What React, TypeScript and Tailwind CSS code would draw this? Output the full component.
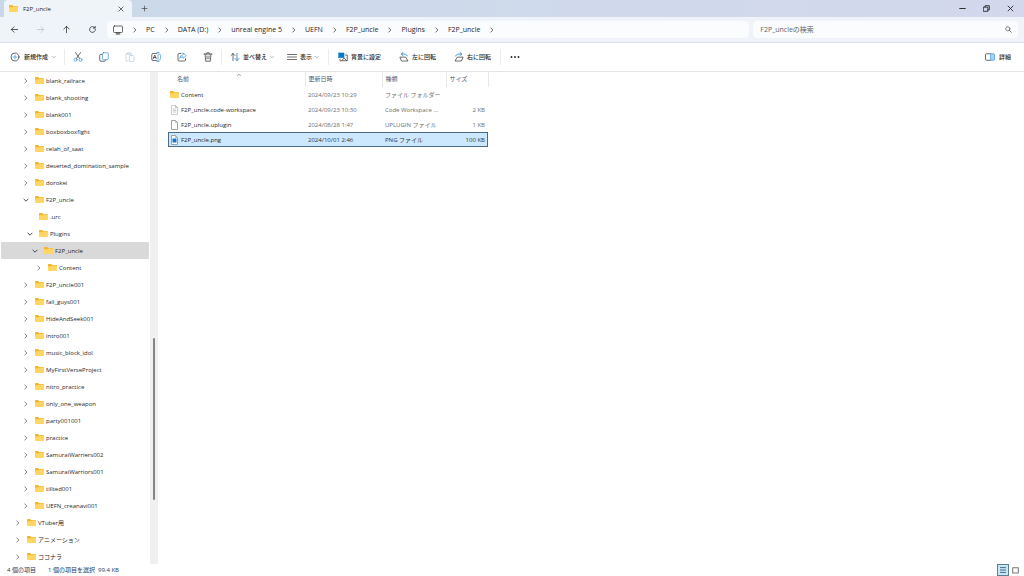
import { useState } from "react";
import type { ReactNode } from "react";

type Node = { name: string; depth: number; state: "closed" | "open" | "leaf" };
type FileKind = "folder" | "workspace" | "blank" | "image";
type FileRow = { name: string; date: string; type: string; size: string; kind: FileKind };

const closed = (name: string, depth = 1): Node => ({ name, depth, state: "closed" });

const tree: Node[] = [
  closed("blank_railrace"),
  closed("blank_shooting"),
  closed("blank001"),
  closed("boxboxboxfight"),
  closed("celah_of_saat"),
  closed("deserted_domination_sample"),
  closed("dorokei"),
  { name: "F2P_uncle", depth: 1, state: "open" },
  { name: ".urc", depth: 2, state: "leaf" },
  { name: "Plugins", depth: 2, state: "open" },
  { name: "F2P_uncle", depth: 3, state: "open" },
  closed("Content", 4),
  closed("F2P_uncle001"),
  closed("fall_guys001"),
  closed("HideAndSeek001"),
  closed("intro001"),
  closed("music_block_idol"),
  closed("MyFirstVerseProject"),
  closed("nitro_practice"),
  closed("only_one_weapon"),
  closed("party001001"),
  closed("practice"),
  closed("SamuraiWarriers002"),
  closed("SamuraiWarriors001"),
  closed("tillted001"),
  closed("UEFN_creanavi001"),
  closed("VTuber用", 0),
  closed("アニメーション", 0),
  closed("ココナラ", 0),
];

const indent = ["pl-3", "pl-5", "pl-6", "pl-[29px]", "pl-[33px]"];

const files: FileRow[] = [
  { name: "Content", date: "2024/09/23 10:29", type: "ファイル フォルダー", size: "", kind: "folder" },
  { name: "F2P_uncle.code-workspace", date: "2024/09/23 10:30", type: "Code Workspace ...", size: "2 KB", kind: "workspace" },
  { name: "F2P_uncle.uplugin", date: "2024/08/28 1:47", type: "UPLUGIN ファイル", size: "1 KB", kind: "blank" },
  { name: "F2P_uncle.png", date: "2024/10/01 2:46", type: "PNG ファイル", size: "100 KB", kind: "image" },
];

const crumbs = ["PC", "DATA (D:)", "unreal engine 5", "UEFN", "F2P_uncle", "Plugins", "F2P_uncle"];

const Svg = ({ children, className = "size-[10px]" }: { children: ReactNode; className?: string }) => (
  <svg viewBox="0 0 20 20" fill="none" stroke="currentColor" strokeWidth="1.3" strokeLinecap="round" strokeLinejoin="round" className={`shrink-0 ${className}`} aria-hidden="true">
    {children}
  </svg>
);

const Folder = () => (
  <svg viewBox="0 0 18 14" className="w-[9px] h-[7px] shrink-0" aria-hidden="true">
    <path d="M0 1.5Q0 0 1.500 0H6L8.500 2H16.500Q18 2 18 3.500V8H0Z" fill="#f3b32b" />
    <path d="M0 4.500H7L9 3H16.500Q18 3 18 4.500V12.500Q18 14 16.500 14H1.500Q0 14 0 12.500Z" fill="#ffd664" />
  </svg>
);

const Chevron = ({ down = false, className = "size-[6px] text-[#444]" }: { down?: boolean; className?: string }) => (
  <Svg className={className}>
    <path d={down ? "M3 7L10 14L17 7" : "M6 3L13 10L6 17"} strokeWidth={down ? 3.2 : 2.2} />
  </Svg>
);

const FileIcon = ({ kind }: { kind: FileKind }) => {
  if (kind === "folder") return <Folder />;
  return (
    <svg viewBox="0 0 16 20" className="w-[9px] h-[10px] shrink-0" fill="none" aria-hidden="true">
      <path d="M2 1H10L14 5V19H2Z" fill="#fff" stroke={kind === "workspace" ? "#bdbdbd" : "#858585"} strokeWidth="1.5" />
      <path d="M10 1V5H14" stroke="#999" strokeWidth="1.2" />
      {kind === "workspace" && <path d="M4.500 8H11.500M4.500 11H11.500M4.500 14H11.500" stroke="#b3b3b3" strokeWidth="1.3" />}
      {kind === "image" && <path d="M4 7H12V15H4Z" fill="#1677c8" />}
    </svg>
  );
};

const Divider = () => <span className="h-4 w-px shrink-0 bg-[#ececec]" />;

const blue = "#2b88d8";

const TitleBar = () => (
  <header className="flex h-[17px] shrink-0 items-stretch bg-linear-to-r from-[#c9d8e8] via-[#cfdaeb] to-[#d3d8ec] pl-1">
    <div className="flex w-32 items-center rounded-t bg-[#eff4f9] pl-[5px] pr-2">
      <Folder />
      <span className="ml-[5px] flex-1 text-[6px] font-medium">F2P_uncle</span>
      <button aria-label="タブを閉じる"><Svg className="size-[6px]"><path d="M3 3L17 17M17 3L3 17" strokeWidth="2.2" /></Svg></button>
    </div>
    <button className="ml-2 px-px" aria-label="新しいタブ"><Svg className="size-[7px] text-[#444]"><path d="M10 3V17M3 10H17" strokeWidth="2" /></Svg></button>
    <div className="ml-auto flex items-center gap-[17px] pr-[10px]">
      <button aria-label="最小化"><Svg className="size-[7px]"><path d="M2 10H18" strokeWidth="2.6" /></Svg></button>
      <button aria-label="元に戻す"><Svg className="size-[7px]"><path d="M2 6H14V18H2ZM6 6V2H18V14H14" strokeWidth="2.4" /></Svg></button>
      <button aria-label="閉じる"><Svg className="size-[7px]"><path d="M3 3L17 17M17 3L3 17" strokeWidth="2.4" /></Svg></button>
    </div>
  </header>
);

const NavBar = () => (
  <nav className="flex h-[26px] shrink-0 items-center border-b border-[#dadfea] bg-linear-to-r from-[#eff4f9] to-[#f1f2fa] pr-[6px] text-[7px]">
    <div className="flex items-center gap-[17px] pl-[10px] pr-[10px]">
      <button aria-label="戻る"><Svg className="size-[9px]"><path d="M17 10H3M9 4L3 10L9 16" strokeWidth="1.6" /></Svg></button>
      <button aria-label="進む" className="text-[#b9bec4]"><Svg className="size-[9px]"><path d="M3 10H17M11 4L17 10L11 16" strokeWidth="1.6" /></Svg></button>
      <button aria-label="上へ"><Svg className="size-[9px]"><path d="M10 17V3M4 9L10 3L16 9" strokeWidth="1.6" /></Svg></button>
      <button aria-label="最新の情報に更新"><Svg className="size-[9px]"><path d="M15.500 6.500A6.500 6.500 0 1 0 16.500 10M16 3V7H12" strokeWidth="1.6" /></Svg></button>
    </div>
    <div className="flex h-[17px] flex-1 items-center rounded bg-[#fbfcfe] pl-[6px]">
      <Svg><path d="M3 2H17Q19 2 19 4V13Q19 15 17 15H3Q1 15 1 13V4Q1 2 3 2ZM6 18H14M8 15V18M12 15V18" /></Svg>
      <Chevron className="ml-[9px] size-[6px]" />
      {crumbs.map((c, i) => (
        <span key={i} className="flex items-center">
          <button className="ml-[7px] px-px">{c}</button>
          <Chevron className="ml-2 size-[6px]" />
        </span>
      ))}
    </div>
    <label className="ml-1 flex h-[17px] w-[26%] items-center rounded bg-[#fbfcfe] pl-[7px] pr-[6px]">
      <input type="search" aria-label="検索" placeholder="F2P_uncleの検索" className="min-w-0 flex-1 bg-transparent outline-none placeholder:text-[#666]" />
      <Svg className="size-[7px] text-[#555]"><circle cx="8" cy="8" r="6" strokeWidth="2" /><path d="M12.500 12.500L18 18" strokeWidth="2.2" /></Svg>
    </label>
  </nav>
);

const Toolbar = () => (
  <div className="flex h-[29px] shrink-0 items-center border-b border-[#e2e4e6] bg-white pl-[10px] pr-[13px] text-[6px] font-medium">
    <button className="flex items-center gap-1">
      <Svg><circle cx="10" cy="10" r="8" /><path d="M10 6V14M6 10H14" stroke={blue} /></Svg>
      新規作成
      <Chevron down className="size-1 text-[#888]" />
    </button>
    <div className="mx-2 flex"><Divider /></div>
    <div className="flex items-center gap-4">
      <button aria-label="切り取り"><Svg><path d="M5 1L13 13M15 1L7 13" /><circle cx="5" cy="15.500" r="3" stroke={blue} /><circle cx="15" cy="15.500" r="3" stroke={blue} /></Svg></button>
      <button aria-label="コピー"><Svg><path d="M5 5H3Q1.500 5 1.500 7V16Q1.500 18.500 4 18.500H11Q13 18.500 13 16" /><rect x="7" y="1.500" width="11.500" height="14" rx="2" stroke={blue} /></Svg></button>
      <button aria-label="貼り付け" className="text-[#c4c8cc]"><Svg><path d="M6 3H2V18H8M13 6V3H10M6 1.500H10V5H6Z" /><rect x="9" y="7" width="9" height="12" rx="1.500" stroke="#a9cdec" /></Svg></button>
      <button aria-label="名前の変更"><Svg><path d="M11 3H4Q1.500 3 1.500 6V14Q1.500 17 4 17H11M4.500 13.500L7.500 6L10.500 13.500M5.500 11H9.500" /><path d="M14 1V19M12 1H16M12 19H16M17 4Q19 4 19 7V13Q19 16 17 16" stroke={blue} /></Svg></button>
      <button aria-label="共有"><Svg><path d="M8 3H4Q2 3 2 5V16Q2 18 4 18H15Q17 18 17 16V13" /><path d="M12 2L18.500 7.500L12 12.500V9.500Q7 9.500 5.500 13Q6 6 12 5Z" stroke={blue} /></Svg></button>
      <button aria-label="削除"><Svg><path d="M2 4H18M4 4L5.500 18.500H14.500L16 4M7 4Q7 1 10 1Q13 1 13 4M8 8V14M12 8V14" /></Svg></button>
    </div>
    <div className="mx-2 flex"><Divider /></div>
    <div className="flex items-center gap-[13px]">
      <button className="flex items-center gap-[3px]">
        <Svg><path d="M6 17V3M2 7L6 3L10 7" /><path d="M14 3V17M10 13L14 17L18 13" stroke={blue} strokeWidth="1.8" /></Svg>
        並べ替え
        <Chevron down className="size-1 text-[#888]" />
      </button>
      <button className="flex items-center gap-[3px]">
        <Svg><path d="M1 5H19M1 10H19M1 15H19" /></Svg>
        表示
        <Chevron down className="size-1 text-[#888]" />
      </button>
    </div>
    <div className="mx-[9px] flex"><Divider /></div>
    <div className="flex items-center gap-[18px]">
      <button className="flex items-center gap-[3px]">
        <Svg><path d="M1 2H12V11H1Z" fill="#0878c9" stroke="#0878c9" /><path d="M15 6H18.500V17.500H4V14M8 17L12 12L17 17" /></Svg>
        背景に設定
      </button>
      <button className="flex items-center gap-[3px]">
        <Svg><path d="M2 11L5 18H18L14 11Z" /><path d="M17 8Q15 3 5 4M8 1L4.500 4L8 7" stroke={blue} strokeWidth="1.8" /></Svg>
        左に回転
      </button>
      <button className="flex items-center gap-[3px]">
        <Svg><path d="M18 11L15 18H2L6 11Z" /><path d="M3 8Q5 3 15 4M12 1L15.500 4L12 7" stroke={blue} strokeWidth="1.8" /></Svg>
        右に回転
      </button>
    </div>
    <div className="mx-[9px] flex"><Divider /></div>
    <button aria-label="もっと見る"><Svg><path d="M3 10H3.010M10 10H10.010M17 10H17.010" strokeWidth="3.600" /></Svg></button>
    <button className="ml-auto flex items-center gap-1">
      <Svg><path d="M11 3.500H3Q1 3.500 1 5.500V14.500Q1 16.500 3 16.500H11" /><path d="M12 3.500H17Q19 3.500 19 5.500V14.500Q19 16.500 17 16.500H12Z" stroke={blue} fill="#a9d5f5" /></Svg>
      詳細
    </button>
  </div>
);

const Tree = () => {
  const [selected, setSelected] = useState(10);
  return (
    <aside className="flex w-[158px] shrink-0 overflow-hidden text-[6px]">
      <ul className="min-w-0 flex-1">
        {tree.map((n, i) => (
          <li key={i} className="px-px">
            <button
              onClick={() => setSelected(i)}
              className={`flex h-[17px] w-full items-center rounded-[1px] ${indent[n.depth]} ${i === selected ? "bg-[#d9d9d9]" : ""}`}
            >
              <span className="ml-[2px] flex w-3 shrink-0">
                {n.state !== "leaf" && <Chevron down={n.state === "open"} />}
              </span>
              <Folder />
              <span className="ml-[2px] whitespace-nowrap">{n.name}</span>
            </button>
          </li>
        ))}
      </ul>
      <div className="flex w-2 flex-col items-center bg-[#f0f0f0]">
        <div className="basis-[54%]" />
        <div className="w-[2px] basis-[33%] rounded bg-[#858585]" />
      </div>
    </aside>
  );
};

const FileList = () => {
  const [selected, setSelected] = useState("F2P_uncle.png");
  return (
    <main className="min-w-0 flex-1 overflow-hidden pl-[10px]">
      <table className="w-80 table-fixed border-collapse text-[6px]">
        <colgroup>
          <col className="w-[137px]" />
          <col className="w-[77px]" />
          <col className="w-16" />
          <col className="w-[42px]" />
        </colgroup>
        <thead className="text-[#4c607a]">
          <tr className="h-[15px] text-left">
            <th className="border-r border-[#e8e8e8] p-0 pb-[2px] pl-[9px] font-normal">
              <div className="flex items-center">
                <span className="w-[60px]">名前</span>
                <Svg className="mb-2 size-1"><path d="M2 14L10 6L18 14" strokeWidth="3" /></Svg>
              </div>
            </th>
            <th className="border-r border-[#e8e8e8] p-0 pb-[2px] pl-[3px] font-normal">更新日時</th>
            <th className="border-r border-[#e8e8e8] p-0 pb-[2px] pl-[3px] font-normal">種類</th>
            <th className="border-r border-[#e8e8e8] p-0 pb-[2px] pl-[3px] font-normal">サイズ</th>
          </tr>
        </thead>
        <tbody>
          {files.map((f) => {
            const on = f.name === selected;
            return (
              <tr
                key={f.name}
                onClick={() => setSelected(f.name)}
                className={`h-[15px] whitespace-nowrap ${on ? "bg-[#cce8ff] text-[#333] outline outline-1 -outline-offset-1 outline-[#4a6a85]" : "text-[#6d6d6d]"}`}
              >
                <td className="p-0 pl-[2px]">
                  <div className="flex items-center gap-[2px] text-[#1f1f1f]">
                    <FileIcon kind={f.kind} />
                    {f.name}
                  </div>
                </td>
                <td className="p-0 pl-[3px]">{f.date}</td>
                <td className="p-0 pl-[3px]">{f.type}</td>
                <td className="p-0 pr-[3px] text-right">{f.size}</td>
              </tr>
            );
          })}
        </tbody>
      </table>
    </main>
  );
};

const StatusBar = () => (
  <footer className="flex h-3 shrink-0 items-center bg-white pl-[7px] pr-1 text-[6px] text-[#1e395b]">
    <span>4 個の項目</span>
    <span className="ml-3">1 個の項目を選択</span>
    <span className="ml-[3px]">99.4 KB</span>
    <div className="ml-auto flex items-center gap-[2px]">
      <button aria-label="詳細表示" className="flex size-3 items-center justify-center border border-[#5c7f92] bg-[#c5e8f7]">
        <Svg className="size-[6px]"><path d="M0 2H20M0 10H20M0 18H20" strokeWidth="2.4" /></Svg>
      </button>
      <button aria-label="大アイコン" className="flex size-[9px] items-center justify-center text-[#777]">
        <Svg className="size-[7px]"><path d="M2 2H18V17H2Z" strokeWidth="3" /></Svg>
      </button>
    </div>
  </footer>
);

export default function App() {
  return (
    <div className="flex h-screen flex-col overflow-hidden bg-white font-['Open_Sans','Noto_Sans_CJK_JP',sans-serif] leading-none text-[#1f1f1f]">
      <TitleBar />
      <NavBar />
      <Toolbar />
      <div className="flex min-h-0 flex-1">
        <Tree />
        <FileList />
      </div>
      <StatusBar />
    </div>
  );
}
